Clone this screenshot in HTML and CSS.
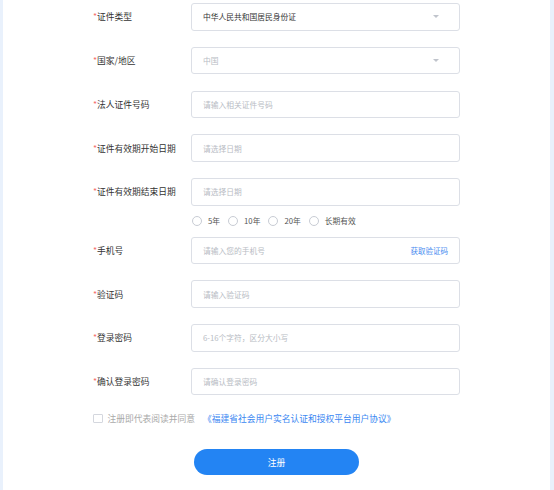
FILE: index.html
```html
<!DOCTYPE html>
<html lang="zh-CN">
<head>
<meta charset="utf-8">
<link rel="stylesheet" href="styles.css">
</head>
<body>
<div class="panel">
  <form class="form">
    <div class="row">
      <label class="label"><span class="req">*</span>证件类型</label>
      <div class="box select"><span class="val">中华人民共和国居民身份证</span><i class="caret"></i></div>
    </div>
    <div class="row">
      <label class="label"><span class="req">*</span>国家/地区</label>
      <div class="box select"><span class="ph">中国</span><i class="caret"></i></div>
    </div>
    <div class="row">
      <label class="label"><span class="req">*</span>法人证件号码</label>
      <div class="box"><span class="ph">请输入相关证件号码</span></div>
    </div>
    <div class="row">
      <label class="label"><span class="req">*</span>证件有效期开始日期</label>
      <div class="box"><span class="ph">请选择日期</span></div>
    </div>
    <div class="row row-tight">
      <label class="label"><span class="req">*</span>证件有效期结束日期</label>
      <div class="box"><span class="ph">请选择日期</span></div>
    </div>
    <div class="radios">
      <span class="radio"><i class="dot"></i>5年</span>
      <span class="radio"><i class="dot"></i>10年</span>
      <span class="radio"><i class="dot"></i>20年</span>
      <span class="radio"><i class="dot"></i>长期有效</span>
    </div>
    <div class="row">
      <label class="label"><span class="req">*</span>手机号</label>
      <div class="box"><span class="ph">请输入您的手机号</span><span class="code">获取验证码</span></div>
    </div>
    <div class="row">
      <label class="label"><span class="req">*</span>验证码</label>
      <div class="box"><span class="ph">请输入验证码</span></div>
    </div>
    <div class="row">
      <label class="label"><span class="req">*</span>登录密码</label>
      <div class="box"><span class="ph">6-16个字符，区分大小写</span></div>
    </div>
    <div class="row">
      <label class="label"><span class="req">*</span>确认登录密码</label>
      <div class="box"><span class="ph">请确认登录密码</span></div>
    </div>
    <div class="agree">
      <i class="check"></i>
      <span class="agree-text">注册即代表阅读并同意</span>
      <a class="agree-link">《福建省社会用户实名认证和授权平台用户协议》</a>
    </div>
    <div class="actions">
      <button type="button" class="btn">注册</button>
    </div>
  </form>
</div>
</body>
</html>
```

FILE: styles.css
```css
html, body {
  margin: 0;
  padding: 0;
}
body {
  background: #e9f1fc;
  font-family: "Noto Sans CJK SC", "Noto Sans", sans-serif;
  height: 490px;
  overflow: hidden;
}
.panel {
  background: #fff;
  margin: 0 4px 0 3px;
  height: 490px;
}
.form {
  padding: 3px 0 0 90px;
  display: flex;
  flex-direction: column;
}
.row {
  display: flex;
  align-items: center;
  height: 27.5px;
  margin-bottom: 16.25px;
}
.row-tight {
  margin-bottom: 0;
}
.label {
  width: 98px;
  flex: none;
  font-size: 8.75px;
  color: #333;
  white-space: nowrap;
}
.req {
  color: #f56c6c;
}
.box {
  box-sizing: border-box;
  width: 269px;
  height: 27.5px;
  border: 1px solid #dcdfe6;
  border-radius: 3px;
  display: flex;
  align-items: center;
  padding: 0 11px;
  font-size: 7.75px;
}
.val {
  color: #333;
}
.ph {
  color: #b8bcc4;
  flex: 1;
}
.select .val, .select .ph {
  flex: 1;
}
.caret {
  width: 0;
  height: 0;
  border-left: 3px solid transparent;
  border-right: 3px solid transparent;
  border-top: 3px solid #c0c4cc;
  margin-right: 9px;
}
.code {
  color: #4a8cf0;
  margin-left: auto;
  font-size: 7.5px;
}
.radios {
  display: flex;
  align-items: center;
  height: 14px;
  margin: 8px 0 9px 98px;
  font-size: 7.75px;
  color: #555;
}
.radio {
  display: flex;
  align-items: center;
  margin-right: 7px;
}
.dot {
  box-sizing: border-box;
  width: 10px;
  height: 10px;
  border: 1px solid #c8ccd4;
  border-radius: 50%;
  margin: 0 6px 0 1px;
}
.agree {
  display: flex;
  align-items: center;
  height: 14px;
  font-size: 8.75px;
}
.check {
  box-sizing: border-box;
  width: 9.5px;
  height: 9.5px;
  border: 1px solid #d4d7de;
  border-radius: 1px;
  margin: 0 5px 0 0;
}
.agree-text {
  color: #aaa;
}
.agree-link {
  color: #3a87f2;
  margin-left: 8px;
}
.actions {
  display: flex;
  padding-left: 101px;
  margin-top: 23.5px;
}
.btn {
  width: 165px;
  height: 26px;
  border: none;
  border-radius: 13px;
  background: #2384f3;
  color: #fff;
  font-family: inherit;
  font-size: 8.75px;
  padding: 0;
}
```
